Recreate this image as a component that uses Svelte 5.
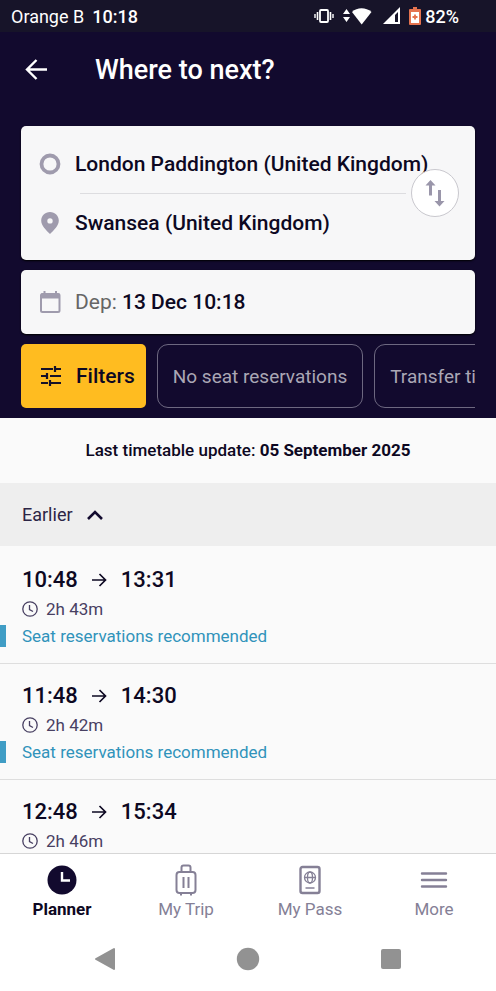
<script lang="ts">
    type Journey = { departs: string; arrives: string; duration: string };

    let from = $state("London Paddington (United Kingdom)");
    let to = $state("Swansea (United Kingdom)");
    let activeTab = $state("Planner");

    const journeys: Array<Journey> = [
        { departs: "10:48", arrives: "13:31", duration: "2h 43m" },
        { departs: "11:48", arrives: "14:30", duration: "2h 42m" },
        { departs: "12:48", arrives: "15:34", duration: "2h 46m" },
    ];

    const chips = ["No seat reservations", "Transfer time"];
    const tabs = ["Planner", "My Trip", "My Pass", "More"];

    const swapStations = () => {
        [from, to] = [to, from];
    };
</script>

<div class="screen">
    <div class="status-bar">
        <span>Orange B</span>
        <span class="clock">10:18</span>
        <div class="status-icons">
            <svg width="20" height="16" viewBox="0 0 20 16" fill="none" stroke="#fff">
                <rect x="6" y="2" width="8" height="12" rx="1" stroke-width="1.8" />
                <path d="M3.5 4v8M16.5 4v8" stroke-width="1.6" />
                <path d="M1 6v4M19 6v4" stroke-width="1.4" />
            </svg>
            <svg class="wifi" width="30" height="18" viewBox="0 0 30 18" fill="#fff">
                <path d="M0 7l3.500-5L7 7zM0 10h7l-3.500 5z" />
                <path d="M9 5c5-5 14-5 19.500 0l-9.800 12.500z" />
            </svg>
            <svg class="signal" width="18" height="18" viewBox="0 0 18 18">
                <path d="M0 17L17 0v17z" fill="#fff" />
                <path d="M12 8l3-3v10h-3z" fill="#171429" />
            </svg>
            <svg class="battery" width="12" height="18" viewBox="0 0 12 18">
                <path d="M4 0h4v2h3q1 0 1 1v14q0 1-1 1H1q-1 0-1-1V3q0-1 1-1h3z" fill="#e5734f" />
                <path d="M2 5h8v11H2z" fill="#fff" />
                <path d="M6 7.500v5M3.500 10h5" stroke="#e5734f" stroke-width="1.800" />
            </svg>
            <span class="percent">82%</span>
        </div>
    </div>

    <header>
        <div class="title-row">
            <button class="back" aria-label="Back">
                <svg width="24" height="22" viewBox="0 0 24 22" fill="none" stroke="#fff" stroke-width="2.400">
                    <path d="M11.500 1L2 10.500l9.500 9.500M2 10.500H22" />
                </svg>
            </button>
            <h1>Where to next?</h1>
        </div>

        <div class="card stations">
            <button class="field">
                <svg width="22" height="22" viewBox="0 0 22 22">
                    <circle cx="11" cy="11" r="8.500" fill="none" stroke="#9f9bad" stroke-width="3.800" />
                </svg>
                {from}
            </button>
            <hr />
            <button class="field">
                <svg width="22" height="22" viewBox="0 0 22 22">
                    <path fill="#9f9bad" fill-rule="evenodd" d="M11 0C6 0 2.200 3.700 2.200 8.600 2.200 14 7 18 11 22c4-4 8.800-8 8.800-13.400C19.800 3.700 16 0 11 0zm0 6.200a2.700 2.700 0 1 1 0 5.400 2.700 2.700 0 0 1 0-5.400z" />
                </svg>
                {to}
            </button>
            <button class="swap" aria-label="Swap stations" onclick={swapStations}>
                <svg width="20" height="28" viewBox="0 0 20 28" fill="#9a96aa">
                    <path d="M5.500 1l5 5.500H7v10H4v-10H.5z" />
                    <path d="M14.500 27.500l-5-5.500H13V11h3v11h3.500z" />
                </svg>
            </button>
        </div>

        <button class="card field date">
            <svg width="22" height="22" viewBox="0 0 22 22" fill="none" stroke="#9f9bad">
                <rect x="2" y="3" width="18.500" height="18" rx="1.500" stroke-width="2" />
                <path d="M2 5h18.500" stroke-width="5" />
                <path d="M5.500 0v4M17 0v4" stroke-width="2" />
            </svg>
            <span><span class="dep">Dep:</span> 13 Dec 10:18</span>
        </button>

        <div class="chips">
            <button class="filters">
                <svg width="22" height="22" viewBox="0 0 22 22" fill="none" stroke="#161128" stroke-width="2.200">
                    <path d="M1 4h12M15 4h6M15 1v6M1 11h6M10 11h11M7 8v6M1 18h7M10 18h11M10 15v6" />
                </svg>
                Filters
            </button>
            {#each chips as chip}
                <button class="chip">{chip}</button>
            {/each}
        </div>
    </header>

    <main>
        <p class="update">Last timetable update: <b>05 September 2025</b></p>
        <button class="earlier">
            Earlier
            <svg width="16" height="10" viewBox="0 0 16 10" fill="none" stroke="#120a2e" stroke-width="2.600">
                <path d="M1 9l7-7 7 7" />
            </svg>
        </button>
        <ul>
            {#each journeys as journey}
                <li>
                    <div class="times">
                        <span>{journey.departs}</span>
                        <svg width="15" height="14" viewBox="0 0 15 14" fill="none" stroke="#0d0822" stroke-width="1.700">
                            <path d="M0 7h13M7.500 1l6 6-6 6" />
                        </svg>
                        <span>{journey.arrives}</span>
                    </div>
                    <div class="duration">
                        <svg width="16" height="16" viewBox="0 0 16 16" fill="none" stroke="#484062" stroke-width="1.300">
                            <circle cx="8" cy="8" r="7.200" />
                            <path d="M7.500 4v4.500l3.500 2" />
                        </svg>
                        {journey.duration}
                    </div>
                    <div class="notice">Seat reservations recommended</div>
                </li>
            {/each}
        </ul>
    </main>

    <nav class="tabs">
        {#each tabs as tab}
            <button class:active={activeTab === tab} onclick={() => (activeTab = tab)}>
                <svg width="32" height="32" viewBox="0 0 32 32" fill="none" stroke="#858096" stroke-width="2">
                    {#if tab === "Planner"}
                        <circle cx="16" cy="16" r="14.500" fill="#120a2e" stroke="none" />
                        <path d="M16 8v8.500h8" stroke="#fff" stroke-width="2.400" />
                    {:else if tab === "My Trip"}
                        <rect x="6.500" y="8" width="19" height="21" rx="3" />
                        <path d="M11.500 8V3.500q0-2 2-2h5q2 0 2 2V8M13.500 13v11M18.500 13v11" />
                        <path d="M11 29v2.500M21 29v2.500" />
                    {:else if tab === "My Pass"}
                        <rect x="6.500" y="3" width="19" height="26" rx="2" stroke-width="2.400" />
                        <g stroke-width="1.300">
                            <circle cx="16" cy="13.500" r="5.500" />
                            <ellipse cx="16" cy="13.500" rx="2.500" ry="5.500" />
                            <path d="M10.500 13.500h11M11.500 24h9" />
                        </g>
                    {:else}
                        <path d="M4 9.500h24M4 16h24M4 22.500h24" stroke-width="2.400" stroke-linecap="round" />
                    {/if}
                </svg>
                {tab}
            </button>
        {/each}
    </nav>

    <div class="system-nav">
        <button aria-label="System back">
            <svg width="24" height="24" viewBox="0 0 24 24" fill="#929292" stroke="#929292" stroke-width="2" stroke-linejoin="round">
                <path d="M3 12L21 2v20z" />
            </svg>
        </button>
        <button aria-label="Home">
            <svg width="24" height="24" viewBox="0 0 24 24" fill="#929292">
                <circle cx="12" cy="12" r="11.200" />
            </svg>
        </button>
        <button aria-label="Recent apps">
            <svg width="24" height="24" viewBox="0 0 24 24" fill="#929292">
                <rect x="2" y="2" width="20" height="20" rx="2" />
            </svg>
        </button>
    </div>
</div>

<style>
    :global(body) {
        margin: 0;
        background: #fff;
    }

    .screen {
        display: flex;
        flex-direction: column;
        height: 100vh;
        color: #0d0822;
        font-family: Roboto, "Liberation Sans", sans-serif;
    }

    button {
        margin: 0;
        padding: 0;
        border: 0;
        background: none;
        color: inherit;
        font: inherit;
        cursor: pointer;
    }

    svg {
        display: block;
        flex-shrink: 0;
    }

    .status-bar {
        display: flex;
        align-items: center;
        gap: 8px;
        height: 32px;
        padding: 0 37px 0 11px;
        background: #171429;
        color: #fff;
        font-size: 18px;
    }

    .clock,
    .percent {
        font-weight: 500;
    }

    .status-icons {
        display: flex;
        align-items: center;
        margin-left: auto;
    }

    .wifi {
        margin-left: 9px;
    }

    .signal {
        margin-left: 10px;
    }

    .battery {
        margin-left: 8px;
    }

    .percent {
        margin-left: 4px;
    }

    header {
        display: flex;
        flex-direction: column;
        gap: 10px;
        padding: 0 21px 10px;
        background: #120a2e;
    }

    .title-row {
        display: flex;
        align-items: center;
        gap: 46px;
        height: 76px;
        padding: 0 4px 8px;
    }

    h1 {
        margin: 0;
        font-size: 27px;
        font-weight: 500;
    }

    h1,
    .back {
        color: #fff;
    }

    .card {
        border-radius: 5px;
        background: #f7f7f8;
        box-shadow: 0 1px 2px #000;
    }

    .stations {
        position: relative;
        padding: 8px 0;
    }

    .field {
        display: flex;
        align-items: center;
        gap: 14px;
        width: 100%;
        height: 59px;
        padding: 0 18px;
        font-size: 21px;
        font-weight: 500;
        text-align: left;
        white-space: nowrap;
    }

    .date {
        height: 64px;
    }

    .dep {
        color: #666;
        font-weight: 400;
    }

    hr {
        height: 1px;
        margin: 0 69px -1px 59px;
        border: 0;
        background: #dddde0;
    }

    .swap {
        position: absolute;
        top: 50%;
        right: 16px;
        display: grid;
        place-items: center;
        width: 48px;
        height: 48px;
        margin-top: -24px;
        border: 1px solid #c9c8ce;
        border-radius: 50%;
        background: #fff;
    }

    .chips {
        display: flex;
        gap: 11px;
        overflow: hidden;
    }

    .filters,
    .chip {
        flex-shrink: 0;
        height: 64px;
        white-space: nowrap;
    }

    .filters {
        display: flex;
        align-items: center;
        gap: 14px;
        padding: 0 11px 0 19px;
        border-radius: 5px;
        background: #ffbc20;
        font-size: 21px;
        font-weight: 500;
    }

    .chip {
        padding: 0 15px;
        border: 1px solid #6d6880;
        border-radius: 11px;
        color: #aaa7b5;
        font-size: 19px;
    }

    main {
        flex: 1;
        min-height: 0;
        overflow: hidden;
        background: #fafafa;
    }

    .update {
        margin: 0;
        font-size: 17px;
        font-weight: 500;
        line-height: 65px;
        text-align: center;
    }

    .update b {
        font-weight: 700;
    }

    .earlier {
        display: flex;
        align-items: center;
        gap: 14px;
        width: 100%;
        height: 63px;
        padding: 0 22px;
        background: #eee;
        color: #2c2545;
        font-size: 18px;
    }

    ul {
        margin: 0;
        padding: 2px 0 0;
        list-style: none;
    }

    li {
        display: grid;
        gap: 4px;
        padding: 19px 22px 14px;
        border-bottom: 1px solid #dedede;
    }

    .times {
        display: flex;
        align-items: center;
        gap: 14px;
        font-size: 22px;
        font-weight: 500;
        line-height: 26px;
    }

    .duration {
        display: flex;
        align-items: center;
        gap: 8px;
        color: #484062;
        font-size: 17px;
        line-height: 24px;
    }

    .notice {
        margin: 0 0 2px -22px;
        padding-left: 16px;
        border-left: 6px solid #409dc5;
        color: #3093bb;
        font-size: 17px;
        line-height: 22px;
    }

    .tabs {
        display: grid;
        grid-template-columns: repeat(4, 1fr);
        border-top: 1px solid #d6d6d6;
        background: #fff;
    }

    .tabs button {
        display: flex;
        flex-direction: column;
        align-items: center;
        gap: 2px;
        padding: 10px 0 8px;
        color: #858096;
        font-size: 17px;
        line-height: 22px;
    }

    .tabs .active {
        color: #0d0822;
        font-weight: 700;
    }

    .system-nav {
        display: grid;
        grid-template-columns: repeat(3, 1fr);
        justify-items: center;
        padding: 19px 34px 20px;
        background: #fff;
    }
</style>
